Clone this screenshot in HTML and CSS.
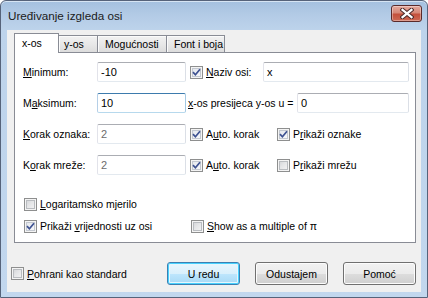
FILE: index.html
```html
<!DOCTYPE html>
<html>
<head>
<meta charset="utf-8">
<link rel="stylesheet" href="styles.css">
</head>
<body>
<div class="window">
  <div class="titlebar">
    <span class="title">Uređivanje izgleda osi</span>
    <div class="close">
      <svg width="14" height="11" viewBox="0 0 14 11"><path d="M2.5 1.8 L11.5 9.2 M11.5 1.8 L2.5 9.2" stroke="#4a2a2a" stroke-width="4.2" stroke-linecap="square" fill="none"/><path d="M2.5 1.8 L11.5 9.2 M11.5 1.8 L2.5 9.2" stroke="#ffffff" stroke-width="2.2" stroke-linecap="square" fill="none"/></svg>
    </div>
  </div>
  <div class="client">
    <div class="tabarea">
      <div class="tabstrip">
        <div class="tab active w-x">x-os</div>
        <div class="tab w-y">y-os</div>
        <div class="tab w-m">Mogućnosti</div>
        <div class="tab w-f">Font i boja</div>
      </div>
      <div class="panel">
        <div class="row">
          <span class="lbl"><u>M</u>inimum:</span>
          <div class="field w89">-10</div>
          <div class="check c73 after"><span class="cb on"><svg width="11" height="11" viewBox="0 0 11 11"><path d="M2 5.2 L4.4 7.8 L9 2.2" stroke="#3d5191" stroke-width="1.7" fill="none"/></svg></span><span><u>N</u>aziv osi:</span></div>
          <div class="field w146">x</div>
        </div>
        <div class="row">
          <span class="lbl">M<u>a</u>ksimum:</span>
          <div class="field w89 focused">10</div>
          <span class="txt"><u>x</u>-os presijeca y-os u =</span>
          <div class="field w112">0</div>
        </div>
        <div class="row">
          <span class="lbl"><u>K</u>orak oznaka:</span>
          <div class="field w89 disabled">2</div>
          <div class="check c87 after"><span class="cb on"><svg width="11" height="11" viewBox="0 0 11 11"><path d="M2 5.2 L4.4 7.8 L9 2.2" stroke="#3d5191" stroke-width="1.7" fill="none"/></svg></span><span>A<u>u</u>to. korak</span></div>
          <div class="check"><span class="cb on"><svg width="11" height="11" viewBox="0 0 11 11"><path d="M2 5.2 L4.4 7.8 L9 2.2" stroke="#3d5191" stroke-width="1.7" fill="none"/></svg></span><span>P<u>r</u>ikaži oznake</span></div>
        </div>
        <div class="row">
          <span class="lbl">K<u>o</u>rak mreže:</span>
          <div class="field w89 disabled">2</div>
          <div class="check c87 after"><span class="cb on"><svg width="11" height="11" viewBox="0 0 11 11"><path d="M2 5.2 L4.4 7.8 L9 2.2" stroke="#3d5191" stroke-width="1.7" fill="none"/></svg></span><span>A<u>u</u>to. korak</span></div>
          <div class="check"><span class="cb"></span><span>P<u>r</u>ikaži mrežu</span></div>
        </div>
        <div class="crow first">
          <div class="check"><span class="cb"></span><span><u>L</u>ogaritamsko mjerilo</span></div>
        </div>
        <div class="crow second">
          <div class="check c167"><span class="cb on"><svg width="11" height="11" viewBox="0 0 11 11"><path d="M2 5.2 L4.4 7.8 L9 2.2" stroke="#3d5191" stroke-width="1.7" fill="none"/></svg></span><span>Prikaži <u>v</u>rijednosti uz osi</span></div>
          <div class="check"><span class="cb"></span><span><u>S</u>how as a multiple of π</span></div>
        </div>
      </div>
    </div>
    <div class="footer">
      <div class="check grow"><span class="cb"></span><span><u>P</u>ohrani kao standard</span></div>
      <div class="btn default">U redu</div>
      <div class="btn">Odustajem</div>
      <div class="btn">Pomoć</div>
    </div>
  </div>
</div>
</body>
</html>
```
FILE: styles.css
```css
html, body {
  margin: 0;
  padding: 0;
  background: #ffffff;
}
body {
  font-family: "Liberation Sans", Arial, sans-serif;
  font-size: 10.5px;
  color: #000;
}
.window {
  width: 428px;
  height: 298px;
  box-sizing: border-box;
  border: 1px solid #56637a;
  border-radius: 6px 6px 0 0;
  background: linear-gradient(180deg, #a4c0df 0px, #b3cbe6 14px, #bdd3eb 29px, #c2d7ee 100%);
  box-shadow: inset 0 1px 0 #d6e4f3;
  display: flex;
  flex-direction: column;
}
.titlebar {
  height: 29px;
  display: flex;
  align-items: flex-start;
  justify-content: space-between;
  padding: 0 5px 0 7px;
}
.title {
  font-size: 11.7px;
  margin-top: 8px;
  color: #1b1b1b;
}
.close {
  margin-top: 4px;
  width: 31px;
  height: 17px;
  box-sizing: border-box;
  border: 1px solid #5a2a2a;
  border-radius: 3px;
  background: linear-gradient(180deg, #e4a99e 0%, #d68877 45%, #c4503b 55%, #cd6a55 100%);
  box-shadow: inset 0 0 0 1px rgba(255,255,255,0.35);
  display: flex;
  align-items: center;
  justify-content: center;
}
.close svg { display: block; }
.client {
  flex: 1;
  margin: 0 6px 5px 6px;
  background: #f0f0f0;
  display: flex;
  flex-direction: column;
}
.tabarea {
  padding: 0 5px 0 7px;
}
.tabstrip {
  height: 22px;
  box-sizing: border-box;
  padding-top: 3px;
  display: flex;
  align-items: flex-end;
}
.tab {
  height: 17px;
  box-sizing: border-box;
  border: 1px solid #898c95;
  border-bottom: none;
  background: linear-gradient(180deg, #f2f2f2 0%, #e8e8e8 50%, #dcdcdc 100%);
  box-shadow: inset 1px 1px 0 #fbfbfb;
  margin-left: -1px;
  padding: 2px 0 0 7px;
  line-height: 13px;
}
.tab.active {
  height: 20px;
  margin-left: 0;
  margin-bottom: -1px;
  background: #ffffff;
  box-shadow: none;
  position: relative;
  z-index: 1;
  padding: 3px 0 0 7px;
}
.w-x { width: 45px; }
.w-y { width: 40px; padding-left: 5px; }
.w-m { width: 70px; }
.w-f { width: 59px; }
.panel {
  width: 402px;
  height: 191px;
  box-sizing: border-box;
  border: 1px solid #898c95;
  background: #ffffff;
  padding: 9px 0 0 8px;
}
.row {
  display: flex;
  align-items: center;
  height: 20px;
  margin-bottom: 11px;
}
.row:nth-child(4) { margin-bottom: 0; }
.lbl {
  width: 74px;
  flex: none;
}
.field {
  height: 20px;
  box-sizing: border-box;
  border: 1px solid #abadb3;
  border-color: #abadb3 #dbdfe6 #e3e9ef #e2e3ea;
  border-radius: 2px;
  background: #fff;
  padding: 0 3px;
  line-height: 18px;
  font-size: 11px;
  flex: none;
}
.field.focused {
  border-color: #3d7bad #a4c9e3 #b7d9ed #b5cfe7;
}
.field.disabled {
  color: #6d6d6d;
}
.w89 { width: 89px; }
.w146 { width: 146px; }
.w112 { width: 112px; }
.txt {
  width: 109px;
  margin-left: 2px;
  flex: none;
  white-space: nowrap;
}
.check {
  display: flex;
  align-items: center;
  flex: none;
  white-space: nowrap;
}
.check.after { margin-left: 4px; }
.c73 { width: 73px; }
.c87 { width: 87px; }
.c167 { width: 167px; }
.cb {
  width: 13px;
  height: 13px;
  box-sizing: border-box;
  border: 1px solid #8e8f8f;
  background: linear-gradient(135deg, #cdcfd2 0%, #e4e5e7 45%, #f7f7f7 100%);
  box-shadow: inset 0 0 0 1px #f4f4f4, inset 0 0 0 2px #b9bcc0;
  margin-right: 3px;
  flex: none;
  display: flex;
  align-items: center;
  justify-content: center;
}
.cb.on {
  background: linear-gradient(135deg, #dfe3ea 0%, #eef0f4 50%, #fbfbfc 100%);
  box-shadow: inset 0 0 0 1px #f4f4f4, inset 0 0 0 2px #c3c8d0;
}
.cb svg { display: block; }
.crow {
  display: flex;
  align-items: center;
  height: 16px;
  padding-left: 1px;
}
.crow.first { margin-top: 21px; }
.crow.second { margin-top: 6px; }
.footer {
  display: flex;
  align-items: center;
  margin-top: 19px;
  padding: 0 5px 0 4px;
  gap: 15px;
}
.grow { flex: 1; }
.btn {
  width: 73px;
  height: 23px;
  box-sizing: border-box;
  border: 1px solid #707070;
  border-radius: 3px;
  background: linear-gradient(180deg, #f2f2f2 0%, #ebebeb 50%, #dddddd 51%, #cfcfcf 100%);
  box-shadow: inset 0 0 0 1px #fcfcfc;
  display: flex;
  align-items: center;
  justify-content: center;
  flex: none;
}
.btn.default {
  border-color: #3c7fb1;
  background: linear-gradient(180deg, #eaf6fd 0%, #d9f0fc 50%, #bee6fd 51%, #a7d9f5 100%);
  box-shadow: inset 0 0 0 1px #48d1fe, inset 0 0 0 2px #e6f6fd;
}
```
